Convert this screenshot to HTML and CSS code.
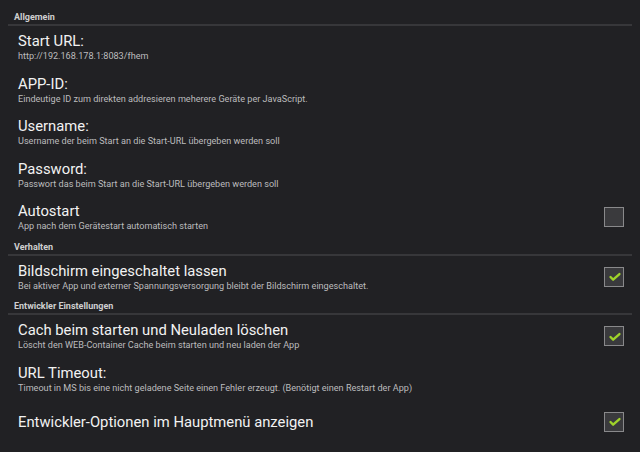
FILE: index.html
```html
<!DOCTYPE html>
<html lang="de">
<head>
<meta charset="utf-8">
<title>Einstellungen</title>
<link rel="stylesheet" href="styles.css">
</head>
<body>
<div class="page">
  <section class="group">
    <div class="header">Allgemein</div>
    <div class="item">
      <div class="text">
        <div class="title">Start URL:</div>
        <div class="summary">http://192.168.178.1:8083/fhem</div>
      </div>
    </div>
    <div class="item">
      <div class="text">
        <div class="title">APP-ID:</div>
        <div class="summary">Eindeutige ID zum direkten addresieren meherere Geräte per JavaScript.</div>
      </div>
    </div>
    <div class="item">
      <div class="text">
        <div class="title">Username:</div>
        <div class="summary">Username der beim Start an die Start-URL übergeben werden soll</div>
      </div>
    </div>
    <div class="item">
      <div class="text">
        <div class="title">Password:</div>
        <div class="summary">Passwort das beim Start an die Start-URL übergeben werden soll</div>
      </div>
    </div>
    <div class="item">
      <div class="text">
        <div class="title">Autostart</div>
        <div class="summary">App nach dem Gerätestart automatisch starten</div>
      </div>
      <span class="checkbox"></span>
    </div>
  </section>
  <section class="group">
    <div class="header">Verhalten</div>
    <div class="item">
      <div class="text">
        <div class="title">Bildschirm eingeschaltet lassen</div>
        <div class="summary">Bei aktiver App und externer Spannungsversorgung bleibt der Bildschirm eingeschaltet.</div>
      </div>
      <span class="checkbox checked"><svg viewBox="0 0 20 20"><path d="M5.3 10.6 L8.4 13.7 L15.8 7.2"/></svg></span>
    </div>
  </section>
  <section class="group">
    <div class="header">Entwickler Einstellungen</div>
    <div class="item">
      <div class="text">
        <div class="title">Cach beim starten und Neuladen löschen</div>
        <div class="summary">Löscht den WEB-Container Cache beim starten und neu laden der App</div>
      </div>
      <span class="checkbox checked"><svg viewBox="0 0 20 20"><path d="M5.3 10.6 L8.4 13.7 L15.8 7.2"/></svg></span>
    </div>
    <div class="item">
      <div class="text">
        <div class="title">URL Timeout:</div>
        <div class="summary">Timeout in MS bis eine nicht geladene Seite einen Fehler erzeugt. (Benötigt einen Restart der App)</div>
      </div>
    </div>
    <div class="item item-single">
      <div class="text">
        <div class="title">Entwickler-Optionen im Hauptmenü anzeigen</div>
      </div>
      <span class="checkbox checked"><svg viewBox="0 0 20 20"><path d="M5.3 10.6 L8.4 13.7 L15.8 7.2"/></svg></span>
    </div>
  </section>
</div>
</body>
</html>
```

FILE: styles.css
```css
html, body {
  margin: 0;
  padding: 0;
  background: #212124;
}

body {
  font-family: Roboto, "Noto Sans", sans-serif;
  width: 640px;
  height: 452px;
  overflow: hidden;
}

.page {
  padding-top: 9px;
  display: flex;
  flex-direction: column;
}

.group {
  display: flex;
  flex-direction: column;
}

.header {
  margin: 0 8px;
  padding: 2px 0 1px 6px;
  font-size: 9px;
  line-height: 12px;
  font-weight: bold;
  color: #cfcfd0;
  border-bottom: 2px solid #37373a;
}

.item {
  height: 42.5px;
  padding: 0 16px 0 18px;
  display: flex;
  align-items: center;
  box-sizing: border-box;
}

.item-single {
  height: 43px;
}

.text {
  flex: 1;
  min-width: 0;
}

.title {
  font-size: 14.8px;
  line-height: 18px;
  color: #f2f2f2;
  white-space: nowrap;
}

.summary {
  font-size: 9.1px;
  line-height: 12px;
  color: #bcbcbe;
  white-space: nowrap;
}

.checkbox {
  flex: none;
  width: 20px;
  height: 20px;
  box-sizing: border-box;
  border: 1.5px solid #89898b;
  background: #3a3a3d;
  display: flex;
  align-items: center;
  justify-content: center;
}

.checkbox svg {
  width: 17px;
  height: 17px;
  fill: none;
  stroke: #9fd22a;
  stroke-width: 2.8;
  stroke-linecap: round;
  stroke-linejoin: round;
}
```
